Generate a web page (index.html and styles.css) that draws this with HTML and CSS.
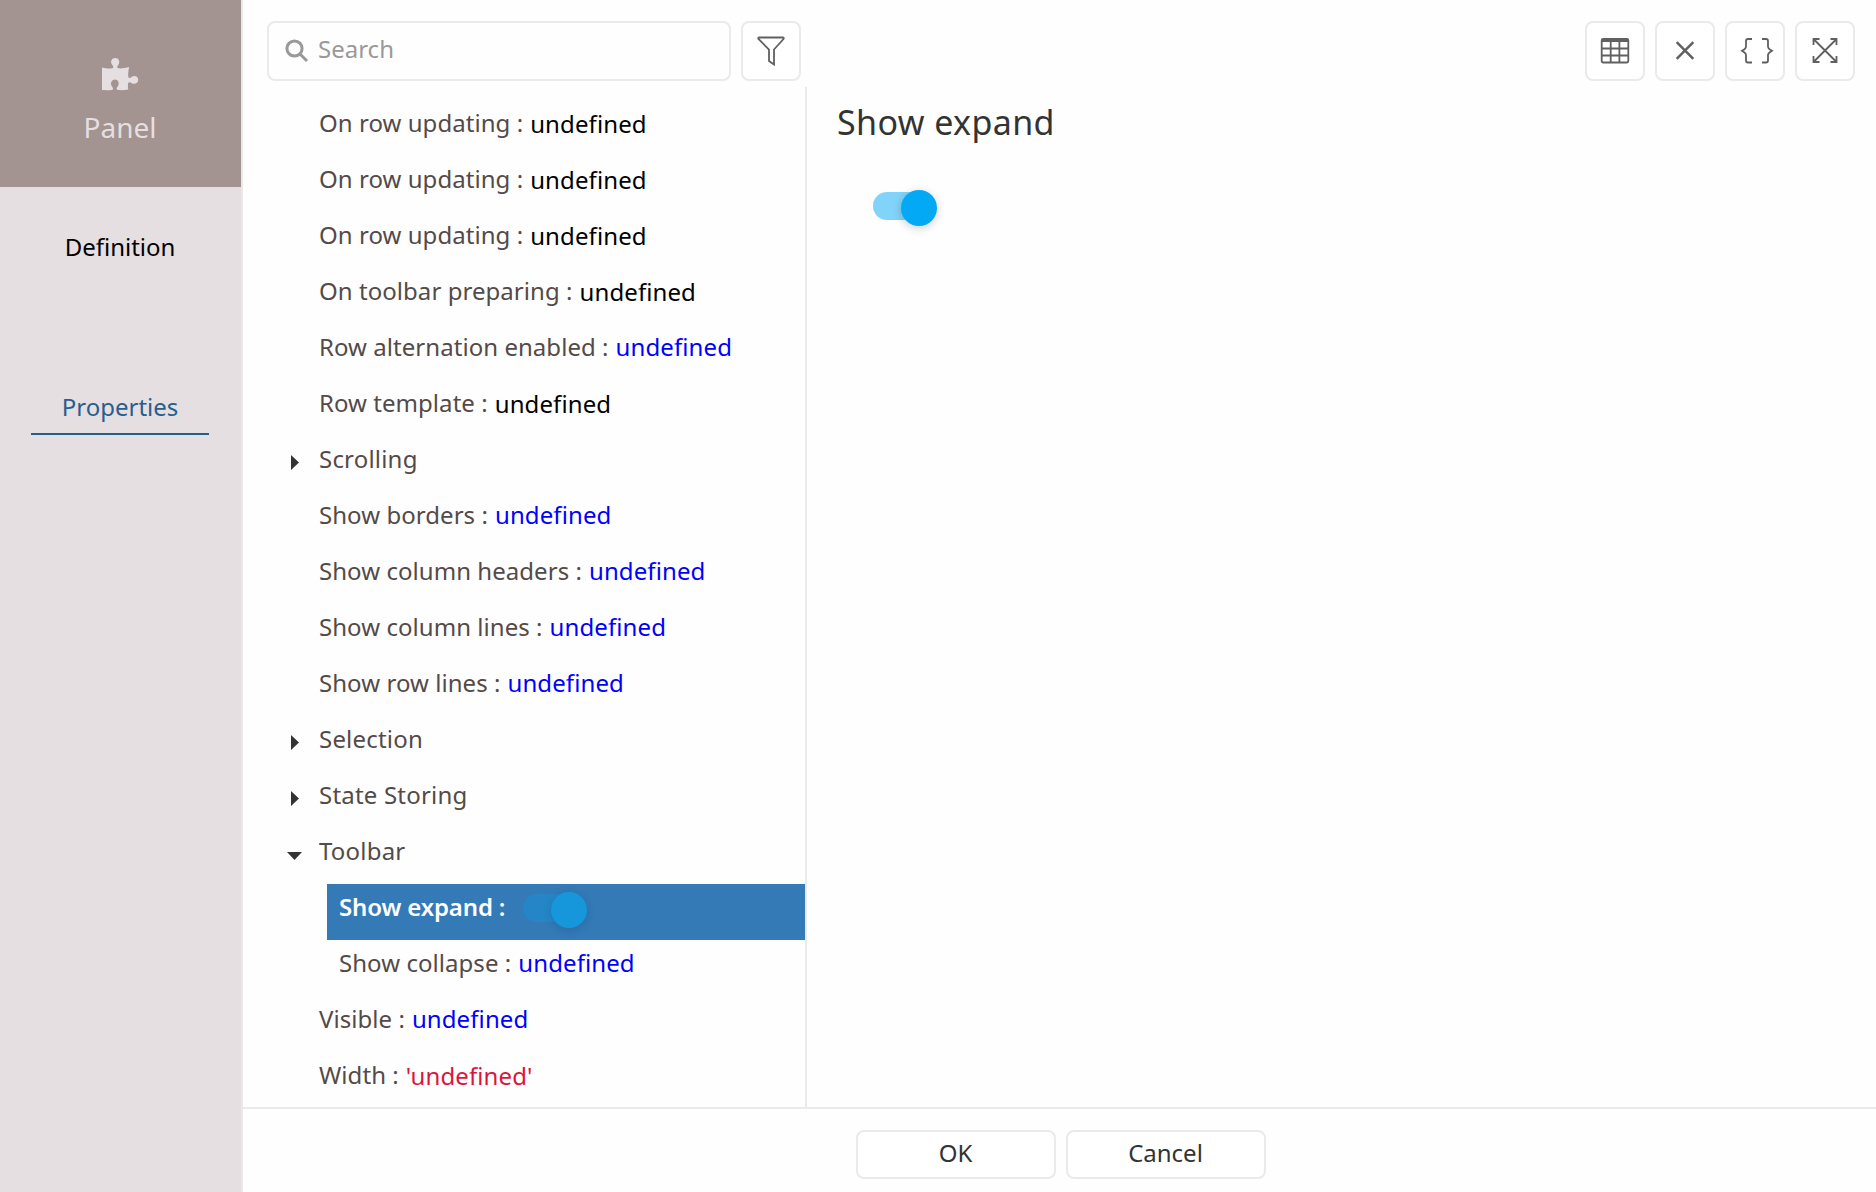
FILE: index.html
```
<!DOCTYPE html>
<html lang="en">
<head>
<meta charset="utf-8">
<title>Panel properties</title>
<link rel="stylesheet" href="styles.css">
</head>
<body>
<aside class="sidebar">
  <div class="sidebar-head">
    <svg class="puzzle" width="38" height="34" viewBox="0 0 38 34"><path d="M1 10.5C5 11.6 9 11.8 11.3 11.2C13 10.7 12.4 9.400 11.300 8C8.700 4.500 10.800 1 14.200 1C17.600 1 19.700 4.500 17.200 8C16 9.700 15.700 11 17.500 11.300C20.500 11.600 25 11 28.200 10C27.300 13.500 27 17 27.300 19.500C27.600 21.500 29 21.300 30.500 20C33.500 17.600 37.200 19.500 37.200 22.800C37.200 26.300 33.500 28 30.500 26C28.500 24.600 27.200 25 27 27C26.800 29 27 31 27.300 32.500C24 33.200 20.500 33.300 17 33C15 32.700 15.300 31.300 16.500 29.800C19 26.500 17.300 22.500 14 22.500C10.500 22.500 8.700 26.500 11.200 29.800C12.500 31.500 12.500 32.600 10.800 32.900C7.500 33.300 4.300 33.200 1 33Z"/></svg>
    <div class="sidebar-title">Panel</div>
  </div>
  <nav class="tabs">
    <a class="tab">Definition</a>
    <a class="tab active">Properties</a>
  </nav>
</aside>
<main class="main">
  <div class="content">
    <section class="browser">
      <div class="searchbar">
        <div class="search">
          <svg width="24" height="24" viewBox="0 0 24 24"><circle cx="9.500" cy="9.500" r="7.600"/><path d="M15 15L22 22"/></svg>
          <span>Search</span>
        </div>
        <button class="icon-btn"><svg width="30" height="32" viewBox="0 0 30 32"><path d="M3 2.500H27Q28.300 2.800 27.500 4L18 14.500V29.500L13 26V14.500L2.500 4Q1.700 2.800 3 2.500Z"/></svg></button>
      </div>
      <div class="tree">
        <div class="row"><span class="label">On row updating :</span><span class="value fn">undefined</span></div>
        <div class="row"><span class="label">On row updating :</span><span class="value fn">undefined</span></div>
        <div class="row"><span class="label">On row updating :</span><span class="value fn">undefined</span></div>
        <div class="row"><span class="label">On toolbar preparing :</span><span class="value fn">undefined</span></div>
        <div class="row"><span class="label">Row alternation enabled :</span><span class="value bool">undefined</span></div>
        <div class="row"><span class="label">Row template :</span><span class="value fn">undefined</span></div>
        <div class="row group"><i class="arrow"></i><span class="label">Scrolling</span></div>
        <div class="row"><span class="label">Show borders :</span><span class="value bool">undefined</span></div>
        <div class="row"><span class="label">Show column headers :</span><span class="value bool">undefined</span></div>
        <div class="row"><span class="label">Show column lines :</span><span class="value bool">undefined</span></div>
        <div class="row"><span class="label">Show row lines :</span><span class="value bool">undefined</span></div>
        <div class="row group"><i class="arrow"></i><span class="label">Selection</span></div>
        <div class="row group"><i class="arrow"></i><span class="label">State Storing</span></div>
        <div class="row group"><i class="arrow open"></i><span class="label">Toolbar</span></div>
        <div class="row child selected"><span class="label">Show expand :</span><span class="switch"><i class="knob"></i></span></div>
        <div class="row child"><span class="label">Show collapse :</span><span class="value bool">undefined</span></div>
        <div class="row"><span class="label">Visible :</span><span class="value bool">undefined</span></div>
        <div class="row"><span class="label">Width :</span><span class="value str">'undefined'</span></div>
      </div>
    </section>
    <section class="detail">
      <div class="actions">
        <button class="icon-btn"><svg width="30" height="28" viewBox="0 0 30 28"><rect x="1.700" y="2" width="26.600" height="23.500" rx="1.500"/><path d="M2 3.500H28" stroke-width="3"/><path d="M2 11.500H28M2 18.500H28M10.700 4V25M19.400 4V25"/></svg></button>
        <button class="icon-btn"><svg width="20" height="20" viewBox="0 0 20 20"><path d="M1.700 1.200L18.300 17.800M18.300 1.200L1.700 17.800" stroke-width="2.500"/></svg></button>
        <button class="icon-btn wide"><svg width="34" height="28" viewBox="0 0 34 28"><path d="M12 2H8Q6 2 6 4V9.500Q6 11 4.500 12.200L2 13.800L4.500 15.400Q6 16.500 6 18V23.500Q6 25.500 8 25.500H12M22 2H26Q28 2 28 4V9.500Q28 11 29.500 12.200L32 13.800L29.500 15.400Q28 16.500 28 18V23.500Q28 25.500 26 25.500H22"/></svg></button>
        <button class="icon-btn"><svg width="28" height="28" viewBox="0 0 28 28"><path d="M2.500 2L25.500 25M25.500 2L2.500 25M2.500 8V2H8.500M19.500 2H25.500V8M25.500 19V25H19.500M8.500 25H2.500V19"/></svg></button>
      </div>
      <h1 class="heading">Show expand</h1>
      <span class="switch"><i class="knob"></i></span>
    </section>
  </div>
  <footer class="footer">
    <button class="btn">OK</button>
    <button class="btn">Cancel</button>
  </footer>
</main>
</body>
</html>
```
FILE: styles.css
```
* { box-sizing: border-box; }

body {
  margin: 0;
  height: 1192px;
  display: flex;
  overflow: hidden;
  background: #fefefe;
  color: #333;
  font: 24px "Noto Sans", "Open Sans", sans-serif;
}

svg { display: block; fill: none; }

/* Sidebar */
.sidebar {
  width: 243px;
  flex: none;
  padding-right: 1px;
  background: linear-gradient(#a39391 187px, #e5dfe1 187px);
  border-right: 2px solid #e9e9e9;
  background-clip: padding-box;
  text-align: center;
}
.sidebar-head {
  height: 187px;
  padding-top: 57px;
  color: #e5dfe1;
}
.puzzle { margin: 0 auto; fill: #e5dfe1; }
.sidebar-title { margin-top: 16px; font-size: 28px; line-height: 40px; }
.tabs { display: flex; flex-direction: column; align-items: center; }
.tab { width: 178px; height: 160px; padding-top: 40px; line-height: 40px; color: #000; }
.tab.active { height: 88px; border-bottom: 2px solid #285e8e; color: #285e8e; }

/* Main area */
.main { flex: 1; display: flex; flex-direction: column; }
.content { flex: 1; display: flex; min-height: 0; }
.browser { width: 564px; flex: none; display: flex; flex-direction: column; }
.searchbar { display: flex; gap: 10px; height: 87px; padding: 21px 6px 6px 24px; }
.search {
  flex: 1;
  display: flex;
  gap: 9px;
  padding: 0 16px;
  border: 2px solid #eaeaea;
  border-radius: 8px;
  color: #999;
  line-height: 51px;
}
.search svg { margin-top: 16px; stroke: #999; stroke-width: 3; }

.icon-btn {
  width: 60px;
  height: 60px;
  flex: none;
  display: flex;
  align-items: center;
  justify-content: center;
  padding: 0;
  border: 2px solid #eaeaea;
  border-radius: 8px;
  background: #fff;
}
.icon-btn svg { stroke: #606060; stroke-width: 1.800; }
.icon-btn.wide svg { margin-left: 4px; }

/* Property tree */
.tree { flex: 1; padding: 13px 0 0 14px; border-right: 2px solid #eaeaea; }
.row {
  display: flex;
  gap: 7px;
  height: 56px;
  padding-left: 62px;
  line-height: 46px;
  white-space: nowrap;
}
.label { color: #544a48; letter-spacing: 0.05px; }
.group { padding-left: 30px; gap: 0; }
.group .label { letter-spacing: 0.2px; }
.arrow { width: 32px; padding: 19px 0 0 4px; }
.arrow::before {
  content: "";
  display: block;
  width: 8px;
  height: 15px;
  background: #333;
  clip-path: polygon(0 0, 100% 50%, 0 100%);
}
.arrow.open { padding: 24px 0 0; }
.arrow.open::before { width: 15px; height: 8px; clip-path: polygon(0 0, 100% 0, 50% 100%); }
.child { margin-left: 70px; padding-left: 12px; }
.value { letter-spacing: 0.1px; }
.fn { color: #000; padding-top: 1px; }
.bool { color: #00f; }
.str { color: #dc143c; padding-top: 1px; }
.selected { background: #337ab7; }
.selected .label { color: #fff; font-weight: 600; letter-spacing: -0.15px; }
.selected .switch { margin: 10px 0 0 11px; opacity: 0.6; }

/* Switch */
.switch {
  display: block;
  width: 64px;
  height: 28px;
  flex: none;
  padding-left: 28px;
  border-radius: 14px;
  background: linear-gradient(90deg, #81d3f9 56px, transparent 56px);
}
.knob {
  display: block;
  width: 36px;
  height: 36px;
  margin-top: -2px;
  border-radius: 50%;
  background: #03a9f4;
  box-shadow: 0 2px 8px rgba(0, 0, 0, 0.2);
}
.selected .switch { background: linear-gradient(90deg, #1b8fd0 56px, transparent 56px); }

/* Detail pane */
.detail { flex: 1; padding: 21px 21px 0 30px; display: flex; flex-direction: column; }
.actions { display: flex; justify-content: flex-end; gap: 10px; }
.heading { margin: 18px 0 0; font-size: 34px; font-weight: 400; line-height: 46px; letter-spacing: 0.4px; }
.detail .switch { margin: 47px 0 0 36px; }

/* Footer */
.footer {
  height: 85px;
  padding: 21px 0 0 2px;
  display: flex;
  gap: 10px;
  justify-content: center;
  border-top: 2px solid #eaeaea;
}
.btn {
  width: 200px;
  height: 49px;
  padding: 0 0 4px;
  border: 2px solid #eaeaea;
  border-radius: 8px;
  background: #fff;
  color: #333;
  font: inherit;
}
```
